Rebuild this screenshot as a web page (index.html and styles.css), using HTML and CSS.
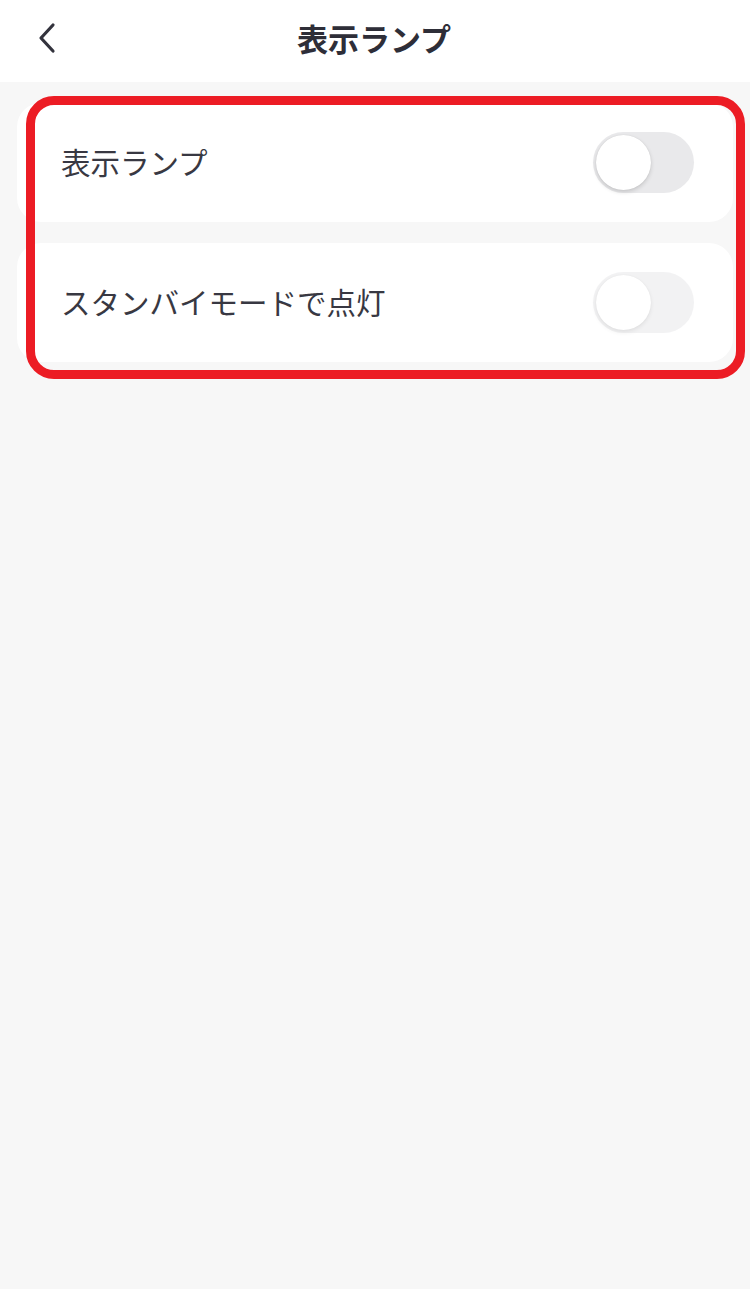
FILE: index.html
```html
<!DOCTYPE html>
<html lang="ja">
<head>
<meta charset="utf-8">
<link rel="stylesheet" href="styles.css">
</head>
<body>
<header class="topbar">
  <span class="back">
    <svg width="24" height="32" viewBox="0 0 24 32"><path d="M18 3 L6 16 L18 29" fill="none" stroke="#33333d" stroke-width="3.2" stroke-linecap="round" stroke-linejoin="round"/></svg>
  </span>
  <h1 class="title">表示ランプ</h1>
</header>
<main class="content">
  <div class="list">
    <div class="card">
      <span class="label">表示ランプ</span>
      <span class="toggle"><span class="knob"></span></span>
    </div>
    <div class="card">
      <span class="label">スタンバイモードで点灯</span>
      <span class="toggle disabled"><span class="knob"></span></span>
    </div>
    <div class="highlight"></div>
  </div>
</main>
</body>
</html>
```
FILE: styles.css
```css
html, body {
  margin: 0;
  padding: 0;
}
body {
  background: #f7f7f7;
  font-family: "Noto Sans CJK JP", "Noto Sans", sans-serif;
  width: 750px;
  min-height: 1289px;
}
.topbar {
  height: 82px;
  background: #ffffff;
  position: relative;
  display: flex;
  align-items: center;
  justify-content: center;
}
.back {
  position: absolute;
  left: 35px;
  top: 22px;
  width: 24px;
  height: 32px;
  display: block;
}
.back svg { display: block; }
.title {
  margin: 0;
  font-size: 31px;
  font-weight: 700;
  color: #2e2e38;
  line-height: 1;
  margin-top: -8px;
  margin-left: -2px;
}
.content {
  padding: 21px 17px;
}
.list {
  position: relative;
  display: flex;
  flex-direction: column;
  gap: 21px;
}
.card {
  background: #ffffff;
  border-radius: 24px;
  height: 119px;
  display: flex;
  align-items: center;
  justify-content: space-between;
  padding: 0 40px 0 44px;
}
.label {
  font-size: 29.5px;
  color: #383842;
  line-height: 1;
  margin-top: -2px;
}
.toggle {
  width: 101px;
  height: 61px;
  border-radius: 31px;
  background: #e9e9eb;
  position: relative;
  display: block;
  margin-right: -1px;
}
.toggle .knob {
  position: absolute;
  left: 3px;
  top: 3px;
  width: 55px;
  height: 55px;
  border-radius: 50%;
  background: #ffffff;
  box-shadow: 0 2px 4px rgba(0,0,0,0.15), 0 0 1px rgba(0,0,0,0.12);
}
.toggle.disabled {
  opacity: 0.55;
}
.highlight {
  position: absolute;
  left: 9px;
  top: -7px;
  width: 719px;
  height: 283px;
  box-sizing: border-box;
  border: 9px solid #ec1c24;
  border-radius: 28px;
  pointer-events: none;
}
```
